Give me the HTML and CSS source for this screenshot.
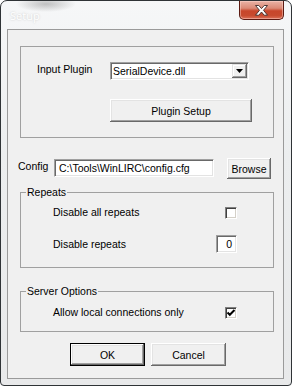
FILE: index.html
```html
<!DOCTYPE html>
<html>
<head>
<meta charset="utf-8">
<link rel="stylesheet" href="styles.css">
</head>
<body>
<div class="window">
  <div class="titlebar">
    <span class="title">Setup</span>
    <div class="close">
      <svg width="15" height="11" viewBox="0 0 15 11"><path d="M1.5 0.5 H4.8 L7.5 3.6 L10.2 0.5 H13.5 L9.5 5.3 L13.5 10.2 H10.2 L7.5 7 L4.8 10.2 H1.5 L5.5 5.3 Z" fill="#fff" stroke="#3b2a28" stroke-width="0.9" stroke-linejoin="round"/></svg>
    </div>
  </div>
  <div class="client">
    <div class="group plugin">
      <span class="label">Input Plugin</span>
      <div class="select">
        <span class="select-text">SerialDevice.dll</span>
        <span class="select-btn"><svg width="7" height="4" viewBox="0 0 7 4"><path d="M0 0 H7 L3.5 4 Z" fill="#000"/></svg></span>
      </div>
      <button class="btn setup">Plugin Setup</button>
    </div>
    <div class="config">
      <span class="cfg-label">Config</span>
      <div class="field">C:\Tools\WinLIRC\config.cfg</div>
      <button class="btn browse">Browse</button>
    </div>
    <fieldset class="fgroup repeats">
      <legend>Repeats</legend>
      <div class="row r1"><span>Disable all repeats</span><span class="check"></span></div>
      <div class="row r2"><span>Disable repeats</span><span class="num">0</span></div>
    </fieldset>
    <fieldset class="fgroup server">
      <legend>Server Options</legend>
      <div class="row r1"><span>Allow local connections only</span><span class="check checked"><svg width="10" height="10" viewBox="0 0 10 10"><path d="M1.5 4.5 L3.8 6.8 L8.5 2" fill="none" stroke="#000" stroke-width="2"/></svg></span></div>
    </fieldset>
    <div class="actions">
      <button class="btn ok">OK</button>
      <button class="btn cancel">Cancel</button>
    </div>
  </div>
</div>
</body>
</html>
```
FILE: styles.css
```css
* { box-sizing: border-box; }
html, body { margin: 0; padding: 0; background: #fff; }
body { font-family: "Liberation Sans", Arial, sans-serif; font-size: 10.5px; color: #000; }

.window {
  width: 292px; height: 386px;
  border: 1px solid #2f3336;
  border-radius: 7px 7px 4px 4px;
  background:
    radial-gradient(ellipse 30px 8px at 45px 3px, rgba(90,90,90,0.35), rgba(90,90,90,0) 100%),
    linear-gradient(#f6f7f8, #eceeef 40%, #e8e9ea);
  padding: 0 7px 6px 6px;
  display: flex; flex-direction: column;
}
.titlebar {
  height: 28px; display: flex; justify-content: space-between; align-items: flex-start;
}
.title {
  margin-top: 7px; margin-left: 3px;
  font-family: "Open Sans", "Liberation Sans", sans-serif; font-size: 11px;
  color: #fff; text-shadow: 0 0 2px rgba(120,120,120,0.4), 0 0 6px rgba(255,255,255,1);
}
.close {
  width: 45px; height: 19px;
  border: 1px solid #5b1a12; border-top: none;
  border-radius: 0 0 5px 5px;
  background: linear-gradient(#eab3a6 0%, #db8a76 40%, #c8462b 55%, #c74a2e 80%, #dc7058 100%);
  box-shadow: inset 0 0 0 1px rgba(255,220,210,0.45);
  display: flex; align-items: center; justify-content: center;
  padding-top: 1px;
}
.client {
  flex: 1;
  border: 1px solid #9a9a9a;
  background: #f0f0f0;
  padding: 16px 9px 0 12px;
  display: flex; flex-direction: column;
}
.group {
  border: 1px solid #a0a0a0;
  height: 92px;
}
.plugin {
  display: grid;
  grid-template-columns: 73px 142px;
  grid-template-rows: 18px 23px;
  row-gap: 19px;
  padding: 15px 0 0 16px;
  align-content: start;
}
.label { padding-top: 1px; line-height: 13px; }
.select {
  width: 139px; height: 18px;
  background: #fff;
  border: 1px solid; border-color: #a0a0a0 #fff #fff #a0a0a0;
  box-shadow: inset 1px 1px 0 #696969, inset -1px -1px 0 #e3e3e3;
  display: flex; align-items: center; justify-content: space-between;
  padding: 1px 1px 1px 2px;
}
.select-text { line-height: 14px; }
.select-btn {
  width: 15px; height: 14px; background: #f0f0f0;
  box-shadow: inset -1px -1px 0 #696969, inset 1px 1px 0 #e3e3e3, inset -2px -2px 0 #a0a0a0, inset 2px 2px 0 #fff;
  display: flex; align-items: center; justify-content: center;
}
.btn {
  font: inherit; color: #000;
  background: #f0f0f0;
  border: none; padding: 0; margin: 0;
  box-shadow: inset -1px -1px 0 #696969, inset 1px 1px 0 #fff, inset -2px -2px 0 #a0a0a0, inset 2px 2px 0 #e3e3e3;
}
.setup { grid-column: 2; width: 142px; height: 23px; }
.config {
  margin: 20px 0 0 -2px;
  display: flex; align-items: flex-start;
  height: 21px;
}
.cfg-label { width: 36px; padding-top: 2px; line-height: 13px; }
.field {
  width: 160px; height: 18px; margin-top: 1px;
  background: #fff;
  border: 1px solid; border-color: #a0a0a0 #fff #fff #a0a0a0;
  box-shadow: inset 1px 1px 0 #696969, inset -1px -1px 0 #e3e3e3;
  padding: 1px 0 0 4px; line-height: 14px;
}
.browse { margin-left: 13px; width: 44px; height: 21px; }
.fgroup {
  margin: 0; padding: 0;
  border: 1px solid #a0a0a0;
  min-inline-size: 0;
}
.fgroup legend {
  margin-left: -27px; padding: 0 1px; line-height: 13px;
}
.repeats { margin-top: 7px; padding: 7px 36px 14px 32px; }
.server { margin-top: 17px; padding: 8px 36px 12px 32px; }
.row { display: flex; justify-content: space-between; align-items: center; }
.r2 { margin-top: 16px; }
.row span:first-child { line-height: 13px; }
.check {
  width: 12px; height: 12px; background: #fff;
  border: 1px solid; border-color: #808080 #fff #fff #808080;
  box-shadow: inset 1px 1px 0 #404040, inset -1px -1px 0 #d4d0c8;
  display: flex; align-items: center; justify-content: center;
}
.num {
  width: 21px; height: 18px; background: #fff;
  border: 1px solid; border-color: #a0a0a0 #fff #fff #a0a0a0;
  box-shadow: inset 1px 1px 0 #696969, inset -1px -1px 0 #e3e3e3;
  text-align: right; padding: 2px 4px 0 0; line-height: 13px;
}
.actions {
  margin-top: 11px;
  display: flex; justify-content: center; gap: 6px;
  padding-left: 2px;
}
.ok, .cancel { width: 75px; height: 23px; }
.ok {
  border: 1px solid #000;
  box-shadow: inset -1px -1px 0 #696969, inset 1px 1px 0 #fff, inset -2px -2px 0 #a0a0a0, inset 2px 2px 0 #e3e3e3;
}
```
